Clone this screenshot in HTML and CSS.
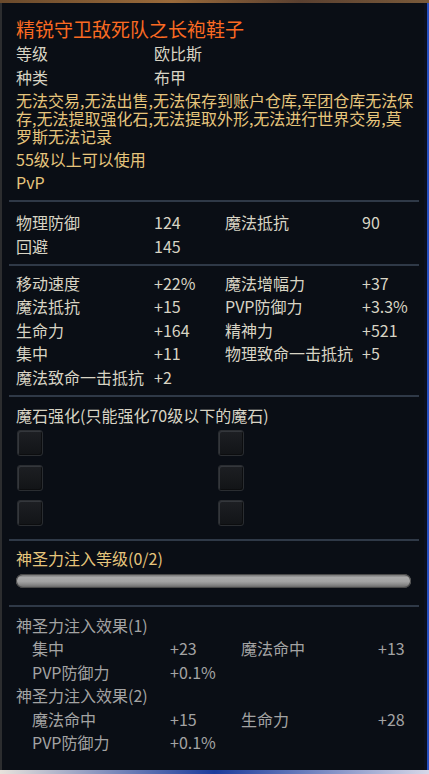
FILE: index.html
```html
<!DOCTYPE html>
<html lang="zh-CN">

<head>
  <meta charset="UTF-8" />
  <meta name="viewport" content="width=device-width, initial-scale=1.0" />
  <title>物品信息</title>
  <link rel="stylesheet" href="styles.css">
</head>

<body>
  <div class="tooltip">
    <h1 class="item-name">精锐守卫敌死队之长袍鞋子</h1>

    <!-- Basic info -->
    <div class="info-grid">
      <span>等级</span><span>欧比斯</span>
      <span>种类</span><span>布甲</span>
    </div>
    <p class="notice">无法交易,无法出售,无法保存到账户仓库,军团仓库无法保存,无法提取强化石,无法提取外形,无法进行世界交易,莫罗斯无法记录</p>
    <p class="req">55级以上可以使用</p>
    <p class="req">PvP</p>

    <div class="divider"></div>

    <!-- Base stats -->
    <div class="stat-grid base-stats">
      <span>物理防御</span><span>124</span><span>魔法抵抗</span><span>90</span>
      <span>回避</span><span>145</span>
    </div>

    <div class="divider"></div>

    <!-- Bonus stats -->
    <div class="stat-grid bonus-stats">
      <span>移动速度</span><span>+22%</span><span>魔法增幅力</span><span>+37</span>
      <span>魔法抵抗</span><span>+15</span><span>PVP防御力</span><span>+3.3%</span>
      <span>生命力</span><span>+164</span><span>精神力</span><span>+521</span>
      <span>集中</span><span>+11</span><span>物理致命一击抵抗</span><span>+5</span>
      <span>魔法致命一击抵抗</span><span>+2</span>
    </div>

    <div class="divider"></div>

    <!-- Manastone slots -->
    <div class="section-title">魔石强化(只能强化70级以下的魔石)</div>
    <div class="slots">
      <div class="slot"></div><div class="slot"></div>
      <div class="slot"></div><div class="slot"></div>
      <div class="slot"></div><div class="slot"></div>
    </div>

    <div class="divider gap-lg"></div>

    <!-- Divine infusion -->
    <div class="section-title gold">神圣力注入等级(0/2)</div>
    <div class="bar"></div>

    <div class="divider gap-xl"></div>

    <div class="effects">
      <div class="effect-title">神圣力注入效果(1)</div>
      <div class="stat-grid effect-grid">
        <span>集中</span><span>+23</span><span>魔法命中</span><span>+13</span>
        <span>PVP防御力</span><span>+0.1%</span>
      </div>
      <div class="effect-title">神圣力注入效果(2)</div>
      <div class="stat-grid effect-grid">
        <span>魔法命中</span><span>+15</span><span>生命力</span><span>+28</span>
        <span>PVP防御力</span><span>+0.1%</span>
      </div>
    </div>
  </div>
</body>

</html>
```

FILE: styles.css
```css
/* Page + game backdrop */
* {
  margin: 0;
  padding: 0;
  box-sizing: border-box;
}

body {
  width: 429px;
  height: 774px;
  overflow: hidden;
  background:
    linear-gradient(90deg, #6a4a2c, #9a6a3a 40%, #5a4030 70%, #7a5a3a) top / 100% 3px no-repeat,
    linear-gradient(90deg, #e8e2dc, #1c3c9c 50%, #d8d8e8) bottom / 100% 4px no-repeat,
    linear-gradient(90deg, #0b1020 0, #0b1020 427px, #2850c0 427px) top / 100% 100% no-repeat;
  font-family: "Noto Sans CJK SC", "Noto Sans", sans-serif;
}

/* Tooltip panel */
.tooltip {
  width: 424px;
  height: 767px;
  margin-top: 3px;
  padding: 14px 8px 0 14px;
  background: #0a0e15;
  border-left: 2px solid #2c2d2f;
  font-size: 16px;
  color: #d8d4c4;
}

.item-name {
  font-size: 19px;
  font-weight: normal;
  line-height: 24px;
  color: #fb6a22;
}

.info-grid {
  display: grid;
  grid-template-columns: 138px 1fr;
  line-height: 24px;
}

.notice {
  margin-top: 2px;
  line-height: 18px;
  color: #e6c57c;
}

.req {
  line-height: 23px;
  color: #e6c57c;
}

.notice + .req {
  margin-top: 3px;
}

/* Dividers */
.divider {
  height: 2px;
  margin: 6px -3px 0 -7px;
  background: #2f3947;
}

.divider.gap-lg {
  margin-top: 13px;
}

.divider.gap-xl {
  margin-top: 17px;
}

/* Stat tables */
.stat-grid {
  display: grid;
  grid-template-columns: 138px 71px 137px 1fr;
  white-space: nowrap;
}

.base-stats {
  margin-top: 8px;
  line-height: 24px;
}

.bonus-stats {
  margin-top: 5.5px;
  line-height: 23.5px;
}

/* Manastones */
.section-title {
  margin-top: 7px;
  line-height: 22px;
}

.section-title.gold {
  margin-top: 6px;
  color: #e6c57c;
}

.slots {
  display: grid;
  grid-template-columns: 201px 26px;
  row-gap: 9px;
  margin: 4px 0 0 1px;
}

.slot {
  width: 26px;
  height: 26px;
  border: 1px solid #2a2d31;
  border-radius: 3px;
  background: linear-gradient(#1d1f23, #121417);
  box-shadow: inset 1px 1px 0 #34373c, inset -1px -1px 0 #0c0d0f;
}

/* Divine infusion bar */
.bar {
  height: 14px;
  margin: 5px 5px 0 0;
  border-radius: 7px;
  background: linear-gradient(#606060 0%, #aaa 25%, #a2a2a2 55%, #858585 78%, #5a5a5a 100%);
  box-shadow: inset 0 0 0 1px #4a4a4a;
}

/* Infusion effects */
.effects {
  margin-top: 7px;
  line-height: 23.4px;
  color: #a3a3a3;
}

.effect-grid {
  padding-left: 16px;
}
```
